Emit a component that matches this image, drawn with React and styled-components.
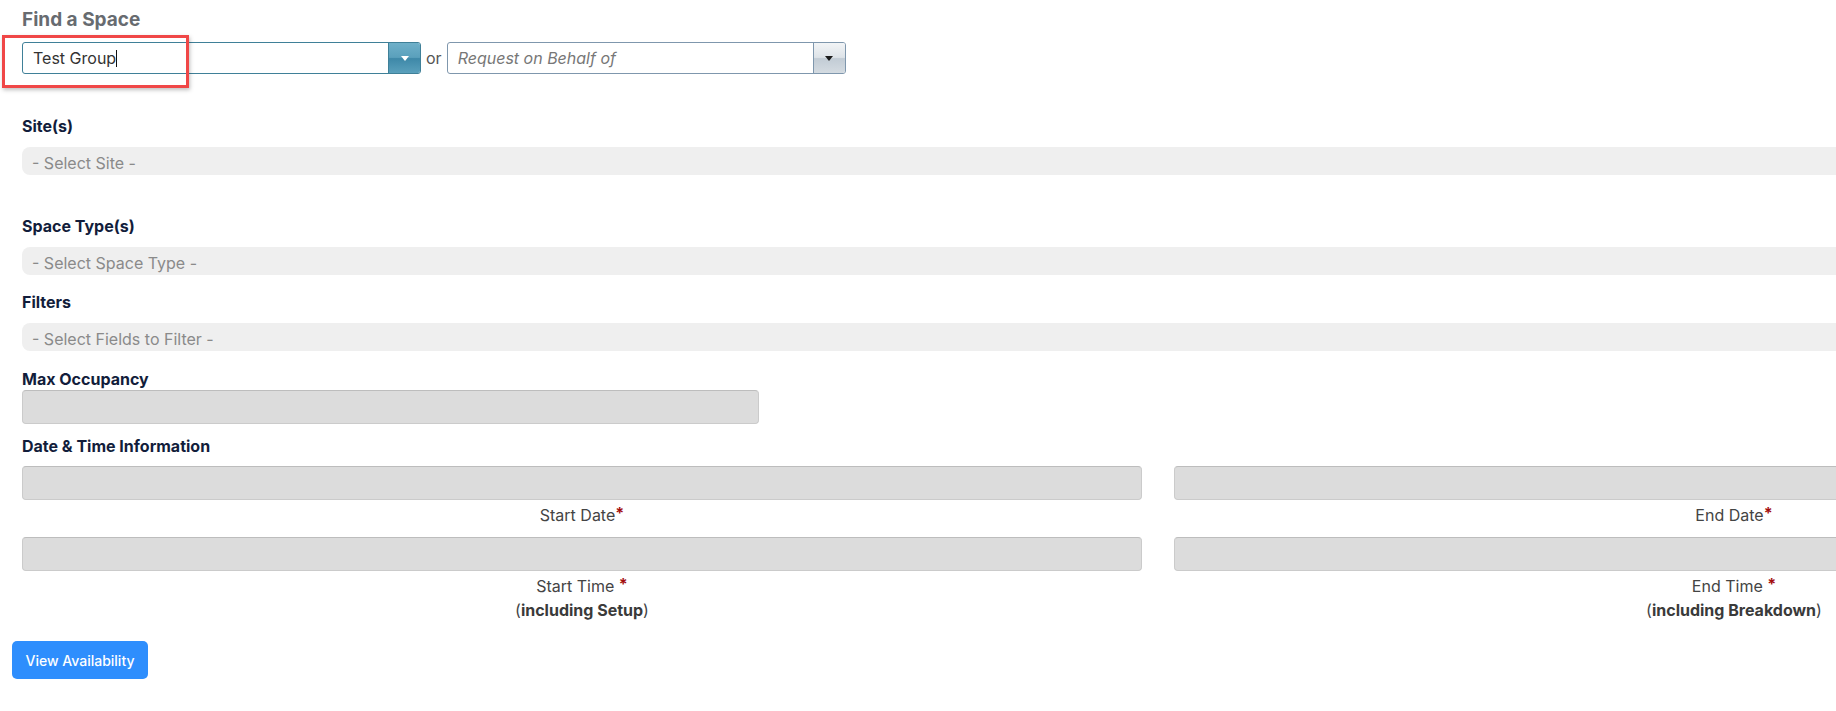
import React from "react";
import styled, { createGlobalStyle } from "styled-components";

const Global = createGlobalStyle`
  html, body { margin: 0; padding: 0; background: #ffffff; overflow: hidden; }
  body { font-family: Inter, "Noto Sans", sans-serif; color: #333; }
`;

const Page = styled.div`
  position: relative;
  width: 2272px;
  padding: 8px 0 30px 22px;
`;

const Title = styled.h2`
  margin: 0;
  font-size: 19px;
  line-height: 24px;
  font-weight: 700;
  color: #676b70;
`;

const ComboRow = styled.div`
  display: flex;
  align-items: center;
  gap: 5px;
  margin-top: 10px;
`;

const Combo = styled.div`
  display: flex;
  width: 399px;
  height: 32px;
  box-sizing: border-box;
  border: 1px solid ${(p) => (p.$active ? "#3f8098" : "#7f97ad")};
  border-radius: 3px;
  background: #fff;
  overflow: hidden;
`;

const ComboText = styled.div`
  flex: 1;
  padding: 0 10px;
  font-size: 16px;
  line-height: 30px;
  color: ${(p) => (p.$placeholder ? "#777" : "#333")};
  font-style: ${(p) => (p.$placeholder ? "italic" : "normal")};
  white-space: nowrap;
`;

const Caret = styled.span`
  display: inline-block;
  width: 1px;
  height: 17px;
  background: #111;
  vertical-align: -3px;
`;

const ComboButton = styled.div`
  width: 31px;
  display: flex;
  align-items: center;
  justify-content: center;
  border-left: 1px solid ${(p) => (p.$active ? "#3f8098" : "#7f97ad")};
  background: ${(p) =>
    p.$active
      ? "linear-gradient(#6fb0c9 0%, #5aa0bc 48%, #3e88a8 52%, #5aa0bc 100%)"
      : "linear-gradient(#f2f4f6 0%, #dde3e8 48%, #c2ccd5 52%, #d4dbe1 100%)"};
`;

const Tri = styled.span`
  width: 0;
  height: 0;
  border-left: 4px solid transparent;
  border-right: 4px solid transparent;
  border-top: 5px solid ${(p) => (p.$light ? "#ffffff" : "#1b1b1b")};
`;

const Or = styled.span`
  font-size: 16px;
  color: #555;
`;

const Highlight = styled.div`
  position: absolute;
  left: 2px;
  top: 35px;
  width: 187px;
  height: 53px;
  box-sizing: border-box;
  border: 3px solid #f04747;
  box-shadow: 1px 2px 4px rgba(0, 0, 0, 0.25);
  pointer-events: none;
`;

const Label = styled.div`
  font-size: 16px;
  line-height: 20px;
  font-weight: 700;
  color: #121d3b;
  margin-top: ${(p) => p.$mt}px;
`;

const SelectBar = styled.div`
  width: 100%;
  height: 28px;
  box-sizing: border-box;
  margin-top: ${(p) => p.$mt}px;
  background: #efefef;
  border-radius: 8px;
  padding: 0 10px;
  font-size: 16px;
  line-height: 32px;
  color: #8a8a8a;
  overflow: hidden;
  white-space: nowrap;
`;

const GrayInput = styled.div`
  width: ${(p) => p.$w || "100%"};
  height: 34px;
  box-sizing: border-box;
  margin-top: ${(p) => p.$mt || 0}px;
  background: #dcdcdc;
  border: 1px solid #cbcbcb;
  border-top-color: #bdbdbd;
  border-radius: 4px;
`;

const DateGrid = styled.div`
  display: grid;
  grid-template-columns: 1120px 1120px;
  column-gap: 32px;
  margin-top: 10px;
`;

const Cell = styled.div`
  display: flex;
  flex-direction: column;
  margin-bottom: ${(p) => p.$mb || 0}px;
`;

const Caption = styled.div`
  margin-top: 3px;
  text-align: center;
  font-size: 16px;
  line-height: 24px;
  color: #444;
`;

const Req = styled.span`
  color: #a30d0d;
  font-weight: 700;
  position: relative;
  top: -2px;
`;

const Strong = styled.b`
  font-weight: 700;
  color: #3a3a3a;
`;

const PrimaryButton = styled.button`
  margin: 19px 0 0 -10px;
  width: 136px;
  height: 38px;
  border: none;
  border-radius: 5px;
  background: #2e8efd;
  color: #fff;
  font-family: Inter, sans-serif;
  font-size: 14px;
  font-weight: 500;
  cursor: pointer;
`;

export default function App() {
  return (
    <>
      <Global />
      <Page>
        <Title>Find a Space</Title>
        <ComboRow>
          <Combo $active>
            <ComboText>
              Test Group<Caret />
            </ComboText>
            <ComboButton $active>
              <Tri $light />
            </ComboButton>
          </Combo>
          <Or>or</Or>
          <Combo>
            <ComboText $placeholder>Request on Behalf of</ComboText>
            <ComboButton>
              <Tri />
            </ComboButton>
          </Combo>
        </ComboRow>
        <Highlight />

        <Label $mt={42}>Site(s)</Label>
        <SelectBar $mt={11}>- Select Site -</SelectBar>

        <Label $mt={41}>Space Type(s)</Label>
        <SelectBar $mt={11}>- Select Space Type -</SelectBar>

        <Label $mt={17}>Filters</Label>
        <SelectBar $mt={11}>- Select Fields to Filter -</SelectBar>

        <Label $mt={18}>Max Occupancy</Label>
        <GrayInput $w="737px" $mt={1} />

        <Label $mt={12}>Date &amp; Time Information</Label>
        <DateGrid>
          <Cell $mb={10}>
            <GrayInput />
            <Caption>
              Start Date<Req>*</Req>
            </Caption>
          </Cell>
          <Cell $mb={10}>
            <GrayInput />
            <Caption>
              End Date<Req>*</Req>
            </Caption>
          </Cell>
          <Cell>
            <GrayInput />
            <Caption>
              Start Time <Req>*</Req>
              <br />(<Strong>including Setup</Strong>)
            </Caption>
          </Cell>
          <Cell>
            <GrayInput />
            <Caption>
              End Time <Req>*</Req>
              <br />(<Strong>including Breakdown</Strong>)
            </Caption>
          </Cell>
        </DateGrid>
        <PrimaryButton>View Availability</PrimaryButton>
      </Page>
    </>
  );
}
